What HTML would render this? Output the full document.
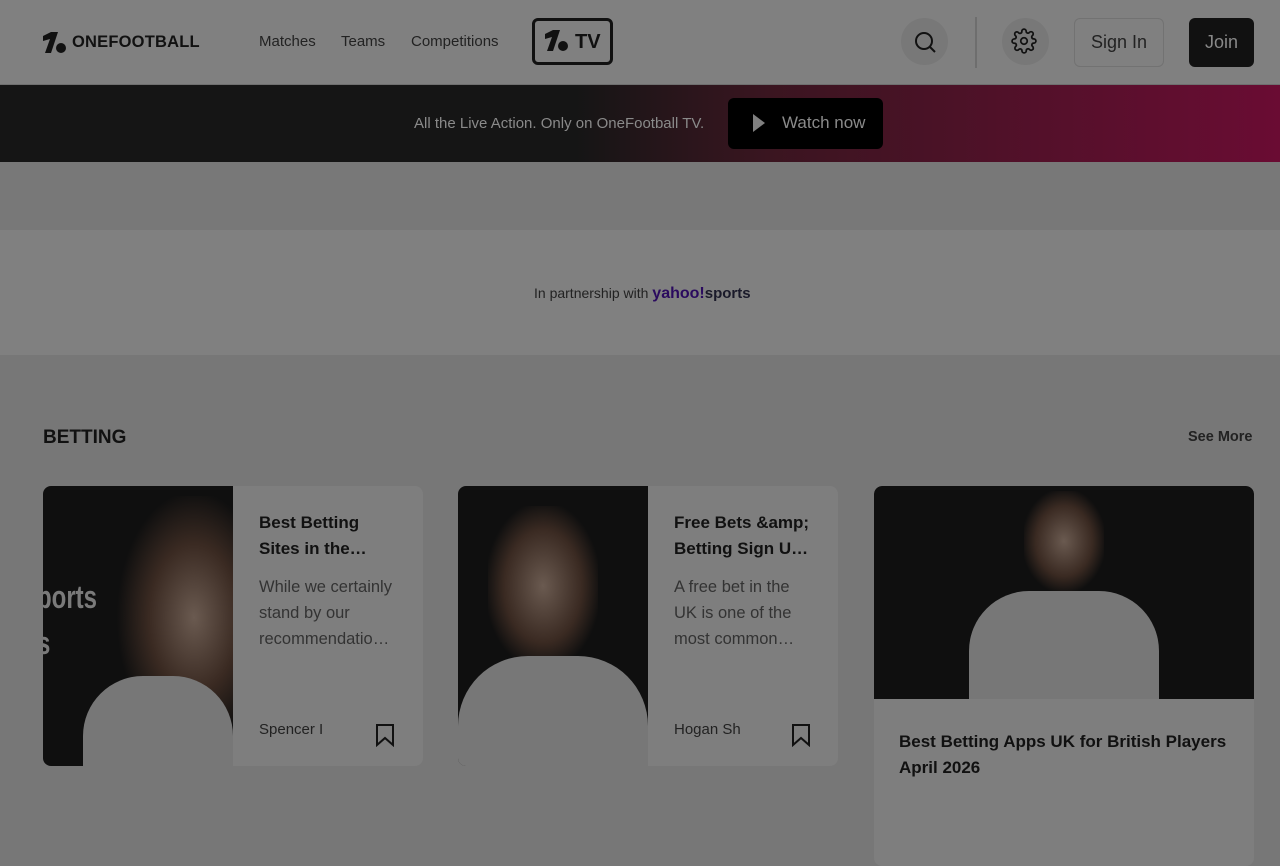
<!DOCTYPE html>
<html><head><meta charset="utf-8"><style>
*{box-sizing:border-box;margin:0;padding:0}
body{width:1280px;height:853px;overflow:hidden;background:#777;font-family:"Liberation Sans",sans-serif;position:relative}
.abs{position:absolute}
.hdr{left:0;top:0;width:1280px;height:85px;background:#808080;border-bottom:1px solid #6f6f6f}
.nav{font-size:15px;color:#222;top:33px}
.ban{left:0;top:85px;width:1280px;height:77px;background:linear-gradient(90deg,#151515 0%,#151515 45%,#3a1520 60%,#6a0c33 100%)}
.card{background:#7e7e7e;border-radius:8px;overflow:hidden}
.img{background:#0f0f0f}
.t{font-weight:bold;font-size:17px;line-height:26px;color:#111}
.d{font-size:16.5px;line-height:26px;color:#333}
</style></head><body>
<div class="abs hdr"></div>
<svg class="abs" style="left:42px;top:31px" width="26" height="24" viewBox="0 0 26 24"><path d="M1 5 L9 1 L16 1 L9 22 L3 22 L8 8 L1 10Z" fill="#111"/><circle cx="19" cy="17" r="5" fill="#111"/></svg>
<div class="abs" style="left:72px;top:33px;font-weight:bold;font-size:16.5px;color:#111;letter-spacing:0.2px">ONEFOOTBALL</div>
<div class="abs nav" style="left:259px">Matches</div>
<div class="abs nav" style="left:341px">Teams</div>
<div class="abs nav" style="left:411px">Competitions</div>
<div class="abs" style="left:532px;top:18px;width:81px;height:47px;border:3px solid #111;border-radius:6px"></div>
<svg class="abs" style="left:544px;top:29px" width="26" height="24" viewBox="0 0 26 24"><path d="M1 5 L9 1 L16 1 L9 22 L3 22 L8 8 L1 10Z" fill="#111"/><circle cx="19" cy="17" r="5" fill="#111"/></svg>
<div class="abs" style="left:575px;top:31px;font-weight:bold;font-size:20px;color:#111">TV</div>
<div class="abs" style="left:901px;top:18px;width:47px;height:47px;border-radius:50%;background:#787878"></div>
<svg class="abs" style="left:912px;top:29px" width="26" height="26" viewBox="0 0 26 26" fill="none" stroke="#111" stroke-width="2"><circle cx="12" cy="12" r="8"/><path d="M18 18 L23 23"/></svg>
<div class="abs" style="left:975px;top:17px;width:2px;height:51px;background:#6e6e6e"></div>
<div class="abs" style="left:1002px;top:18px;width:47px;height:47px;border-radius:50%;background:#787878"></div>
<svg class="abs" style="left:1011px;top:28px" width="26" height="26" viewBox="0 0 24 24" fill="none" stroke="#111" stroke-width="1.6"><circle cx="12" cy="12" r="3"/><path d="M19.4 15a1.6 1.6 0 0 0 .3 1.8l.1.1a2 2 0 1 1-2.8 2.8l-.1-.1a1.6 1.6 0 0 0-1.8-.3 1.6 1.6 0 0 0-1 1.5V21a2 2 0 1 1-4 0v-.1a1.6 1.6 0 0 0-1-1.5 1.6 1.6 0 0 0-1.8.3l-.1.1a2 2 0 1 1-2.8-2.8l.1-.1a1.6 1.6 0 0 0 .3-1.8 1.6 1.6 0 0 0-1.5-1H3a2 2 0 1 1 0-4h.1a1.6 1.6 0 0 0 1.5-1 1.6 1.6 0 0 0-.3-1.8l-.1-.1a2 2 0 1 1 2.8-2.8l.1.1a1.6 1.6 0 0 0 1.8.3H9a1.6 1.6 0 0 0 1-1.5V3a2 2 0 1 1 4 0v.1a1.6 1.6 0 0 0 1 1.5 1.6 1.6 0 0 0 1.8-.3l.1-.1a2 2 0 1 1 2.8 2.8l-.1.1a1.6 1.6 0 0 0-.3 1.8V9a1.6 1.6 0 0 0 1.5 1H21a2 2 0 1 1 0 4h-.1a1.6 1.6 0 0 0-1.5 1z"/></svg>
<div class="abs" style="left:1074px;top:18px;width:90px;height:49px;border:1px solid #727272;border-radius:6px;font-size:18px;color:#222;text-align:center;line-height:47px">Sign In</div>
<div class="abs" style="left:1189px;top:18px;width:65px;height:49px;background:#111;border-radius:6px;font-size:18px;color:#888;text-align:center;line-height:49px">Join</div>
<div class="abs ban"></div>
<div class="abs" style="left:414px;top:115px;font-size:15px;color:#8a8a8a">All the Live Action. Only on OneFootball TV.</div>
<div class="abs" style="left:728px;top:98px;width:155px;height:51px;background:#000;border-radius:6px"></div>
<svg class="abs" style="left:752px;top:113px" width="14" height="20"><path d="M1 1 L13 10 L1 19Z" fill="#808080"/></svg>
<div class="abs" style="left:782px;top:113px;font-size:17px;color:#8a8a8a">Watch now</div>
<div class="abs" style="left:0;top:162px;width:1280px;height:68px;background:#787878"></div>
<div class="abs" style="left:0;top:230px;width:1280px;height:125px;background:#808080"></div>
<div class="abs" style="left:534px;top:285px;font-size:14px;color:#222">In partnership with <b style="color:#2a0a5e;font-size:16px">yahoo!</b><b style="color:#1a1a2a;font-size:15px">sports</b></div>
<div class="abs" style="left:43px;top:427px;font-weight:bold;font-size:19px;color:#111">BETTING</div>
<div class="abs" style="left:1188px;top:429px;font-weight:bold;font-size:14.5px;color:#222">See More</div>

<div class="abs card" style="left:43px;top:486px;width:380px;height:280px">
 <div class="abs img" style="left:0;top:0;width:190px;height:280px"><div style="position:absolute;left:-6px;top:88px;color:#7a7a7a;font-weight:bold;font-size:32px;line-height:46px;transform:scaleX(0.75);transform-origin:left">ports<br>s</div><div style="position:absolute;left:60px;top:10px;width:130px;height:270px;background:radial-gradient(ellipse at 70% 45%,#6a5a50 0,#3a2a22 35%,#0f0f0f 60%)"></div><div style="position:absolute;left:40px;top:190px;width:150px;height:90px;background:#777;border-radius:60px 60px 0 0"></div></div>
 <div class="abs t" style="left:216px;top:24px;width:150px">Best Betting<br>Sites in the…</div>
 <div class="abs d" style="left:216px;top:88px">While we certainly<br>stand by our<br>recommendatio…</div>
 <div class="abs" style="left:216px;top:235px;font-size:15px;color:#222">Spencer I</div>
 <svg class="abs" style="left:332px;top:237px" width="20" height="24" fill="none" stroke="#111" stroke-width="2"><path d="M2 2H18V22L10 15L2 22Z"/></svg>
</div>
<div class="abs card" style="left:458px;top:486px;width:380px;height:280px">
 <div class="abs img" style="left:0;top:0;width:190px;height:280px"><div style="position:absolute;left:30px;top:20px;width:110px;height:160px;background:radial-gradient(ellipse at 50% 50%,#6a5a50 0,#3a2a22 50%,#0f0f0f 75%)"></div><div style="position:absolute;left:0;top:170px;width:190px;height:110px;background:#777;border-radius:70px 70px 0 0"></div></div>
 <div class="abs t" style="left:216px;top:24px;width:150px">Free Bets &amp;amp;<br>Betting Sign U…</div>
 <div class="abs d" style="left:216px;top:88px">A free bet in the<br>UK is one of the<br>most common…</div>
 <div class="abs" style="left:216px;top:235px;font-size:15px;color:#222">Hogan Sh</div>
 <svg class="abs" style="left:333px;top:237px" width="20" height="24" fill="none" stroke="#111" stroke-width="2"><path d="M2 2H18V22L10 15L2 22Z"/></svg>
</div>
<div class="abs card" style="left:874px;top:486px;width:380px;height:380px">
 <div class="abs img" style="left:0;top:0;width:380px;height:213px;border-radius:8px 8px 0 0"><div style="position:absolute;left:150px;top:5px;width:80px;height:100px;background:radial-gradient(ellipse,#6a5a50 0,#3a2a22 50%,#0f0f0f 75%)"></div><div style="position:absolute;left:95px;top:105px;width:190px;height:108px;background:#777;border-radius:60px 60px 0 0"></div></div>
 <div class="abs t" style="left:25px;top:243px;width:340px">Best Betting Apps UK for British Players April 2026</div>
</div>
</body></html>
